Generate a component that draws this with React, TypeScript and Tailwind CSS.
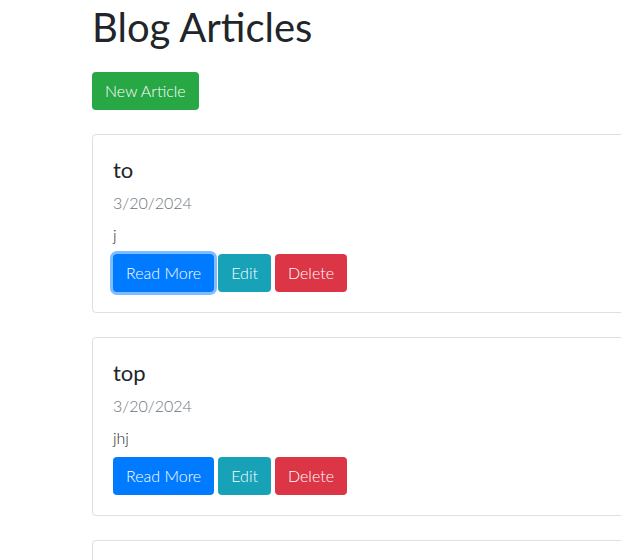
import React from 'react';

type Article = { id: number; title: string; date: string; body: string };

const articles: Article[] = [
  { id: 1, title: 'to', date: '3/20/2024', body: 'j' },
  { id: 2, title: 'top', date: '3/20/2024', body: 'jhj' },
];

const btn = 'inline-block rounded-[4px] border border-transparent px-3 py-[6px] text-base leading-6 font-light text-white';

const App = () => {
  return (
    <div className="h-[560px] w-full overflow-hidden bg-white font-['Lato','Liberation_Sans',sans-serif] text-[#212529]">
      <div className="ml-[92px] w-[640px]">
        <h1 className="mt-[3px] mb-2 text-[40px] leading-[48px] font-normal">Blog Articles</h1>
        <button className={`${btn} mt-[13px] mb-6 bg-[#28a745]`}>New Article</button>

        {articles.map((a, i) => (
          <div key={a.id} className="mb-6 rounded-[4px] border border-black/[0.125] p-5">
            <h5 className="mb-[9px] pt-[3px] text-[22px] leading-6 font-normal">{a.title}</h5>
            <div className="mb-2 text-base leading-6 font-light text-[#6c757d]">{a.date}</div>
            <p className="mb-[7px] text-base leading-6 font-light">{a.body}</p>
            <div className="flex gap-1">
              <button
                className={`${btn} bg-[#007bff] ${i === 0 ? 'shadow-[0_0_0_3px_rgba(0,123,255,0.5)]' : ''}`}
              >
                Read More
              </button>
              <button className={`${btn} bg-[#17a2b8]`}>Edit</button>
              <button className={`${btn} bg-[#dc3545]`}>Delete</button>
            </div>
          </div>
        ))}

        {/* next card, only its top edge is in view */}
        <div className="h-[180px] rounded-[4px] border border-black/[0.125]" />
      </div>
    </div>
  );
};

export default App;
